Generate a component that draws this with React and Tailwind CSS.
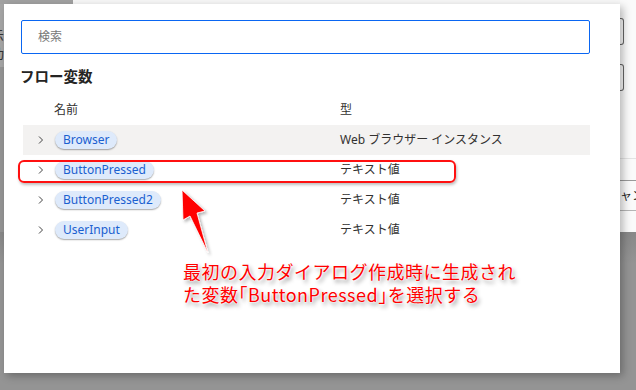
import React from "react";

const rows = [
  { name: "Browser", type: "Web ブラウザー インスタンス", hover: true },
  { name: "ButtonPressed", type: "テキスト値" },
  { name: "ButtonPressed2", type: "テキスト値" },
  { name: "UserInput", type: "テキスト値" },
];

function Chevron() {
  return (
    <svg width="8" height="10" viewBox="0 0 8 10" className="shrink-0">
      <path d="M2 1.5 L5.5 5 L2 8.5" fill="none" stroke="#444" strokeWidth="1" />
    </svg>
  );
}

export default function App() {
  return (
    <div className="relative w-[636px] h-[390px] overflow-hidden bg-[#949494] font-['Noto_Sans','Noto_Sans_CJK_JP',sans-serif]">
      {/* page behind the dialog */}
      <div className="flex h-[232px]">
        <div className="w-[620px] flex flex-col">
          <div className="flex h-[4px]">
            <div className="w-[73px] bg-[#a1a1a1]" />
            <div className="flex-1 bg-[#f7f7f7]" />
          </div>
          <div className="w-[4px] h-[63px] bg-[#a5a5a5] overflow-hidden text-[13px] leading-[18px] text-[#333] pt-[22px]">
            <div className="-ml-[9px]">示</div>
            <div className="-ml-[9px]">功</div>
          </div>
        </div>
        <div className="w-[16px] bg-[#fafafa] flex flex-col overflow-hidden">
          <div className="mt-[18px] w-[4px] h-[27px] border border-l-0 border-[#666] rounded-r-[3px]" />
          <div className="mt-[19px] w-[4px] h-[27px] border border-l-0 border-[#666] rounded-r-[3px]" />
          <div className="mt-[67px] h-px bg-[#e3e3e3]" />
          <div className="mt-[21px] h-px bg-[#9a9a9a]" />
          <div className="h-[29px] flex items-center whitespace-nowrap text-[12px] text-[#222]">ャンセル</div>
          <div className="h-px bg-[#b5b5b5]" />
          <div className="flex-1 bg-[#fafafa]" />
        </div>
      </div>
      <div className="h-[158px] bg-gradient-to-b from-[#888] to-[#949494] to-[20%]" />

      {/* dialog */}
      <div className="absolute left-[4px] top-[4px] w-[616px] h-[369px] bg-white shadow-[3px_3px_8px_rgba(0,0,0,0.28)] pt-[16px] pl-[17px] pr-[30px]">
        <div className="h-[34px] border-[1.5px] border-[#0a66f2] rounded-[2px] flex items-center pl-[16px] text-[12px] text-[#777]">
          検索
        </div>
        <div className="mt-[12px] text-[14.5px] font-semibold text-[#252423] leading-[20px] -ml-[1px]">
          フロー変数
        </div>
        <div className="mt-[14px] flex h-[20px] items-center text-[12px] text-[#323130]">
          <div className="w-[319px] pl-[33px]">名前</div>
          <div>型</div>
        </div>
        <div className="mt-[5px] ml-[2px] flex flex-col">
          {rows.map((r) => (
            <div
              key={r.name}
              className={`h-[30px] flex items-center text-[12px] ${r.hover ? "bg-[#f3f2f1]" : ""}`}
            >
              <div className="w-[32px] pl-[14px] flex items-center">
                <Chevron />
              </div>
              <div className="w-[285px] flex items-center">
                <span className="h-[18px] px-[8px] rounded-full bg-[#deeafb] text-[#1a5fd0] leading-[18px] shadow-[0_1px_1.5px_rgba(0,0,0,0.35)]">
                  {r.name}
                </span>
              </div>
              <div className="text-[#323130]">{r.type}</div>
            </div>
          ))}
        </div>
      </div>

      {/* annotation: highlight box */}
      <div className="absolute left-[18px] top-[160px] w-[438px] h-[23px] border-2 border-[#ff1010] rounded-[6px] shadow-[1px_2px_3px_rgba(0,0,0,0.25)]" />

      {/* annotation: arrow */}
      <svg
        className="absolute left-[176px] top-[186px]"
        width="40"
        height="72"
        viewBox="0 0 40 72"
      >
        <defs>
          <filter id="sh" x="-30%" y="-30%" width="160%" height="160%">
            <feDropShadow dx="2" dy="2" stdDeviation="1.5" floodColor="#000" floodOpacity="0.3" />
          </filter>
        </defs>
        <polygon
          points="6,4 29,25 21,27 32,67 14,30 7,34"
          fill="#ff0000"
          stroke="#ffffff"
          strokeWidth="0.8"
          filter="url(#sh)"
        />
      </svg>

      {/* annotation: text */}
      <div className="absolute left-[183px] top-[260px] text-[18px] leading-[23px] text-[#ff0000] font-['Noto_Sans_CJK_JP',sans-serif] tracking-[0.5px] [text-shadow:0_0_1px_#fff,0_0_2px_#fff,0_0_2px_#fff,2px_3px_4px_rgba(0,0,0,0.45)]">
        <div>最初の入力ダイアログ作成時に生成され</div>
        <div>
          た変数<span className="[font-feature-settings:'halt']">「</span>ButtonPressed<span className="[font-feature-settings:'halt']">」</span>を選択する
        </div>
      </div>
    </div>
  );
}
